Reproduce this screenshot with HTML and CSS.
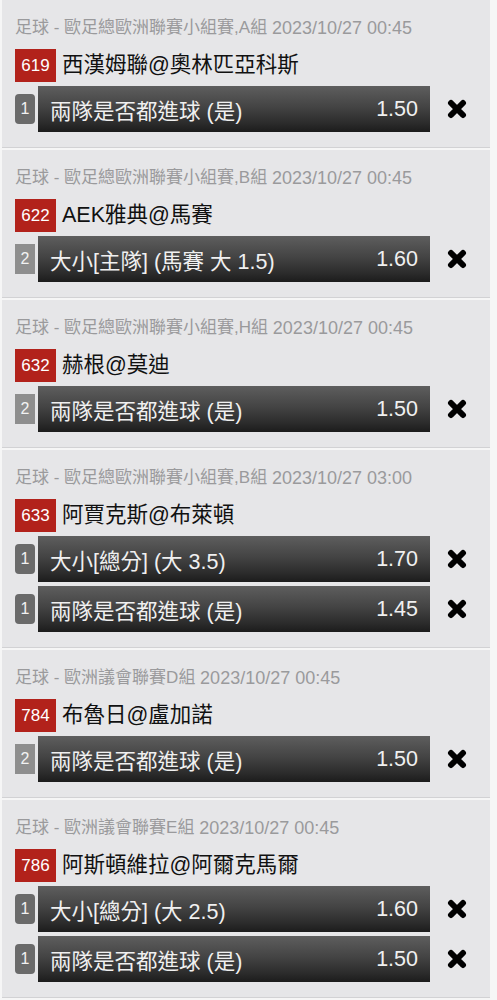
FILE: index.html
```html
<!DOCTYPE html>
<html lang="zh-Hant">
<head>
    <meta charset="UTF-8">
    <meta name="viewport" content="width=device-width, initial-scale=1.0">
    <title>Bet Slip</title>
    <link rel="stylesheet" href="styles.css">
</head>
<body>
    <div class="slip">
        <div class="card">
            <div class="league">足球 - 歐足總歐洲聯賽小組賽,A組 <span class="time">2023/10/27 00:45</span></div>
            <div class="match"><span class="code">619</span><span class="teams">西漢姆聯@奧林匹亞科斯</span></div>
            <div class="bet">
                <span class="num">1</span>
                <div class="bar"><span class="pick">兩隊是否都進球 (是)</span><span class="odds">1.50</span></div>
                <button class="remove"><svg viewBox="0 0 20 20" width="20" height="20"><path d="M4 4L16 16M16 4L4 16"/></svg></button>
            </div>
        </div>

        <div class="card">
            <div class="league">足球 - 歐足總歐洲聯賽小組賽,B組 <span class="time">2023/10/27 00:45</span></div>
            <div class="match"><span class="code">622</span><span class="teams">AEK雅典@馬賽</span></div>
            <div class="bet">
                <span class="num num-square">2</span>
                <div class="bar"><span class="pick">大小[主隊] (馬賽 大 1.5)</span><span class="odds">1.60</span></div>
                <button class="remove"><svg viewBox="0 0 20 20" width="20" height="20"><path d="M4 4L16 16M16 4L4 16"/></svg></button>
            </div>
        </div>

        <div class="card">
            <div class="league">足球 - 歐足總歐洲聯賽小組賽,H組 <span class="time">2023/10/27 00:45</span></div>
            <div class="match"><span class="code">632</span><span class="teams">赫根@莫迪</span></div>
            <div class="bet">
                <span class="num num-square">2</span>
                <div class="bar"><span class="pick">兩隊是否都進球 (是)</span><span class="odds">1.50</span></div>
                <button class="remove"><svg viewBox="0 0 20 20" width="20" height="20"><path d="M4 4L16 16M16 4L4 16"/></svg></button>
            </div>
        </div>

        <div class="card">
            <div class="league">足球 - 歐足總歐洲聯賽小組賽,B組 <span class="time">2023/10/27 03:00</span></div>
            <div class="match"><span class="code">633</span><span class="teams">阿賈克斯@布萊頓</span></div>
            <div class="bet">
                <span class="num">1</span>
                <div class="bar"><span class="pick">大小[總分] (大 3.5)</span><span class="odds">1.70</span></div>
                <button class="remove"><svg viewBox="0 0 20 20" width="20" height="20"><path d="M4 4L16 16M16 4L4 16"/></svg></button>
            </div>
            <div class="bet">
                <span class="num">1</span>
                <div class="bar"><span class="pick">兩隊是否都進球 (是)</span><span class="odds">1.45</span></div>
                <button class="remove"><svg viewBox="0 0 20 20" width="20" height="20"><path d="M4 4L16 16M16 4L4 16"/></svg></button>
            </div>
        </div>

        <div class="card">
            <div class="league">足球 - 歐洲議會聯賽D組 <span class="time">2023/10/27 00:45</span></div>
            <div class="match"><span class="code">784</span><span class="teams">布魯日@盧加諾</span></div>
            <div class="bet">
                <span class="num num-square">2</span>
                <div class="bar"><span class="pick">兩隊是否都進球 (是)</span><span class="odds">1.50</span></div>
                <button class="remove"><svg viewBox="0 0 20 20" width="20" height="20"><path d="M4 4L16 16M16 4L4 16"/></svg></button>
            </div>
        </div>

        <div class="card">
            <div class="league">足球 - 歐洲議會聯賽E組 <span class="time">2023/10/27 00:45</span></div>
            <div class="match"><span class="code">786</span><span class="teams">阿斯頓維拉@阿爾克馬爾</span></div>
            <div class="bet">
                <span class="num">1</span>
                <div class="bar"><span class="pick">大小[總分] (大 2.5)</span><span class="odds">1.60</span></div>
                <button class="remove"><svg viewBox="0 0 20 20" width="20" height="20"><path d="M4 4L16 16M16 4L4 16"/></svg></button>
            </div>
            <div class="bet">
                <span class="num">1</span>
                <div class="bar"><span class="pick">兩隊是否都進球 (是)</span><span class="odds">1.50</span></div>
                <button class="remove"><svg viewBox="0 0 20 20" width="20" height="20"><path d="M4 4L16 16M16 4L4 16"/></svg></button>
            </div>
        </div>
    </div>
</body>
</html>
```

FILE: styles.css
```css
body {
    margin: 0;
    background-color: #f6f6f6;
    font-family: "Liberation Sans", "Noto Sans CJK TC", sans-serif;
}

.slip {
    margin: 0 7px 0 2px;
}

.card {
    background-color: #e6e6e8;
    padding: 18px 0 15px 13px;
    border-bottom: 1px solid #d2d2d4;
    margin-bottom: 2px;
}

.league {
    height: 20px;
    font-size: 17px;
    line-height: 20px;
    color: #9a9a9c;
    margin-bottom: 11px;
    white-space: nowrap;
}

.time {
    font-size: 18px;
    line-height: 20px;
    vertical-align: top;
}

.match {
    display: flex;
    align-items: center;
    height: 33px;
    margin-bottom: 4px;
}

.code {
    width: 41px;
    height: 33px;
    line-height: 33px;
    background-color: #b2221b;
    color: #fff;
    font-size: 17px;
    text-align: center;
}

.teams {
    margin-left: 6px;
    font-size: 21.5px;
    line-height: 33px;
    color: #111;
}

.bet {
    display: flex;
    align-items: center;
    margin-bottom: 4px;
}

.bet:last-child {
    margin-bottom: 0;
}

.num {
    width: 20px;
    height: 30px;
    line-height: 30px;
    border-radius: 4px;
    background-color: #6a6a6a;
    color: #f2f2f2;
    font-size: 16px;
    text-align: center;
    margin-right: 3px;
}

.num-square {
    border-radius: 0;
    background-color: #8e8e8e;
}

.bar {
    width: 392px;
    height: 46px;
    display: flex;
    align-items: center;
    justify-content: space-between;
    padding: 0 12px;
    box-sizing: border-box;
    background: linear-gradient(to bottom, #5e5e5e 0%, #444 45%, #2c2c2c 80%, #1c1c1c 100%);
    color: #f0f0f0;
    font-size: 21.5px;
}

.remove {
    margin-left: 17px;
    padding: 0;
    border: none;
    background: none;
    width: 20px;
    height: 20px;
    cursor: pointer;
}

.remove svg {
    display: block;
}

.remove path {
    stroke: #000;
    stroke-width: 6;
    stroke-linecap: round;
    fill: none;
}
```
